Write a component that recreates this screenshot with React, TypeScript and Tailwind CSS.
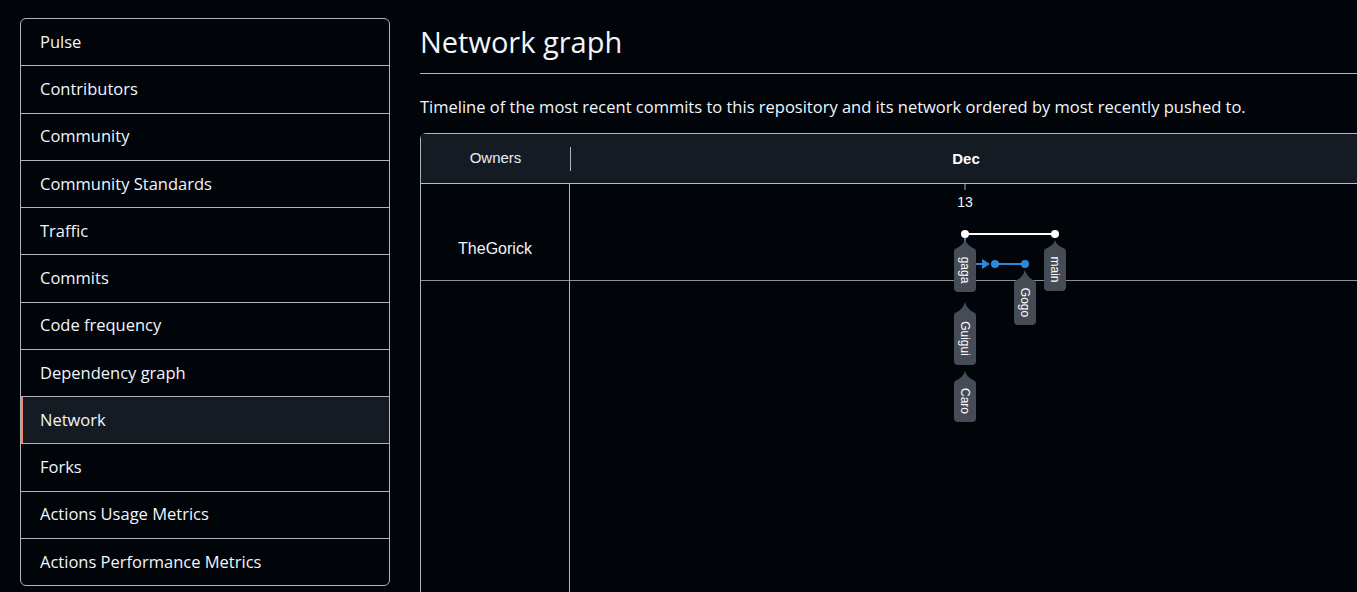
const navItems = [
  'Pulse',
  'Contributors',
  'Community',
  'Community Standards',
  'Traffic',
  'Commits',
  'Code frequency',
  'Dependency graph',
  'Network',
  'Forks',
  'Actions Usage Metrics',
  'Actions Performance Metrics',
];

interface Tag {
  label: string;
  x: number;
  tip: number;
  top: number;
  bottom: number;
}

const tags: Tag[] = [
  { label: 'gaga', x: 395, tip: 55, top: 64, bottom: 108 },
  { label: 'main', x: 485, tip: 56, top: 64, bottom: 107 },
  { label: 'Gogo', x: 455, tip: 86, top: 96, bottom: 141 },
  { label: 'Guigui', x: 395, tip: 118, top: 128, bottom: 181 },
  { label: 'Caro', x: 395, tip: 187, top: 196, bottom: 238 },
];

function BranchTag({ label, x, tip, top, bottom }: Tag) {
  const cy = (top + bottom) / 2;
  return (
    <g>
      <path
        d={`M${x} ${tip} C${x + 1} ${tip + 4} ${x + 4} ${top - 2} ${x + 8} ${top} L${x - 8} ${top} C${x - 4} ${top - 2} ${x - 1} ${tip + 4} ${x} ${tip} Z`}
        fill="#454c55"
      />
      <rect x={x - 11} y={top} width={22} height={bottom - top} rx={4} fill="#454c55" />
      <text
        x={x}
        y={cy}
        fill="#ffffff"
        fontSize={12}
        textAnchor="middle"
        dominantBaseline="central"
        transform={`rotate(90 ${x} ${cy})`}
        style={{ fontFamily: '"Liberation Sans", Arial, sans-serif' }}
      >
        {label}
      </text>
    </g>
  );
}

function NetworkCanvas() {
  const blue = '#2d8ad9';
  return (
    <svg className="absolute left-0 top-0" width={800} height={420}>
      <line x1={395} y1={0} x2={395} y2={6} stroke="#aeb4bc" strokeWidth={1} />
      <text
        x={395}
        y={23}
        fill="#f0f6fc"
        fontSize={14}
        textAnchor="middle"
        style={{ fontFamily: '"Liberation Sans", Arial, sans-serif' }}
      >
        13
      </text>
      <path d="M395 50 V80 H412" stroke={blue} strokeWidth={2} fill="none" />
      <polygon points="412,75 412,85 420,80" fill={blue} />
      <line x1={425} y1={80} x2={455} y2={80} stroke={blue} strokeWidth={2} />
      <circle cx={425} cy={80} r={4} fill={blue} />
      <circle cx={455} cy={80} r={4} fill={blue} />
      <line x1={395} y1={50} x2={485} y2={50} stroke="#ffffff" strokeWidth={2} />
      <circle cx={395} cy={50} r={4} fill="#ffffff" />
      <circle cx={485} cy={50} r={4} fill="#ffffff" />
      {tags.map((t) => (
        <BranchTag key={t.label} {...t} />
      ))}
    </svg>
  );
}

export default function App() {
  return (
    <div className="h-[592px] overflow-hidden bg-[#010409] text-[#f0f6fc] font-['Open_Sans',sans-serif]">
      <div className="flex gap-[30px] pl-5 pt-[18px]">
        <nav className="w-[370px] shrink-0 self-start overflow-hidden rounded-md border border-[#aeb4bc]">
          {navItems.map((item, i) => {
            const selected = item === 'Network';
            return (
              <div
                key={item}
                className={`flex items-center text-[16.5px] ${i > 0 ? 'h-[47.25px] border-t border-[#aeb4bc]' : 'h-[46.25px]'} ${
                  selected ? 'border-l-2 border-l-[#f78166] bg-[#151b23] pl-[17px]' : 'pl-[19px]'
                }`}
              >
                {item}
              </div>
            );
          })}
        </nav>

        <main className="w-[980px] shrink-0">
          <h1 className="mt-[4px] border-b border-[#aeb4bc] pb-[11px] text-[29px] leading-[40px] font-normal">
            Network graph
          </h1>
          <p className="mt-[21px] text-[16.5px] leading-6">
            Timeline of the most recent commits to this repository and its network ordered by most recently pushed to.
          </p>

          <div className="mt-[14px] rounded-tl-md border border-[#aeb4bc] font-['Liberation_Sans',Arial,sans-serif]">
            <div className="flex h-[50px] items-center border-b border-[#b7bdc8] bg-[#151b23]">
              <div className="flex w-[149px] justify-center text-[15px] text-[#e6edf3]">Owners</div>
              <div className="h-6 w-px bg-[#aeb4bc]" />
              <div className="relative h-full flex-1">
                <span className="absolute left-[395px] top-1/2 -translate-x-1/2 -translate-y-1/2 text-[15px] font-bold text-white">
                  Dec
                </span>
              </div>
            </div>
            <div className="flex">
              <div className="w-[149px] border-r border-[#aeb4bc]">
                <div className="flex h-[97px] items-center justify-center border-b border-[#8b9199] pt-[34px] text-base">
                  TheGorick
                </div>
                <div className="h-[320px]" />
              </div>
              <div className="relative flex-1">
                <div className="h-[97px] border-b border-[#8b9199]" />
                <div className="h-[320px]" />
                <NetworkCanvas />
              </div>
            </div>
          </div>
        </main>
      </div>
    </div>
  );
}
